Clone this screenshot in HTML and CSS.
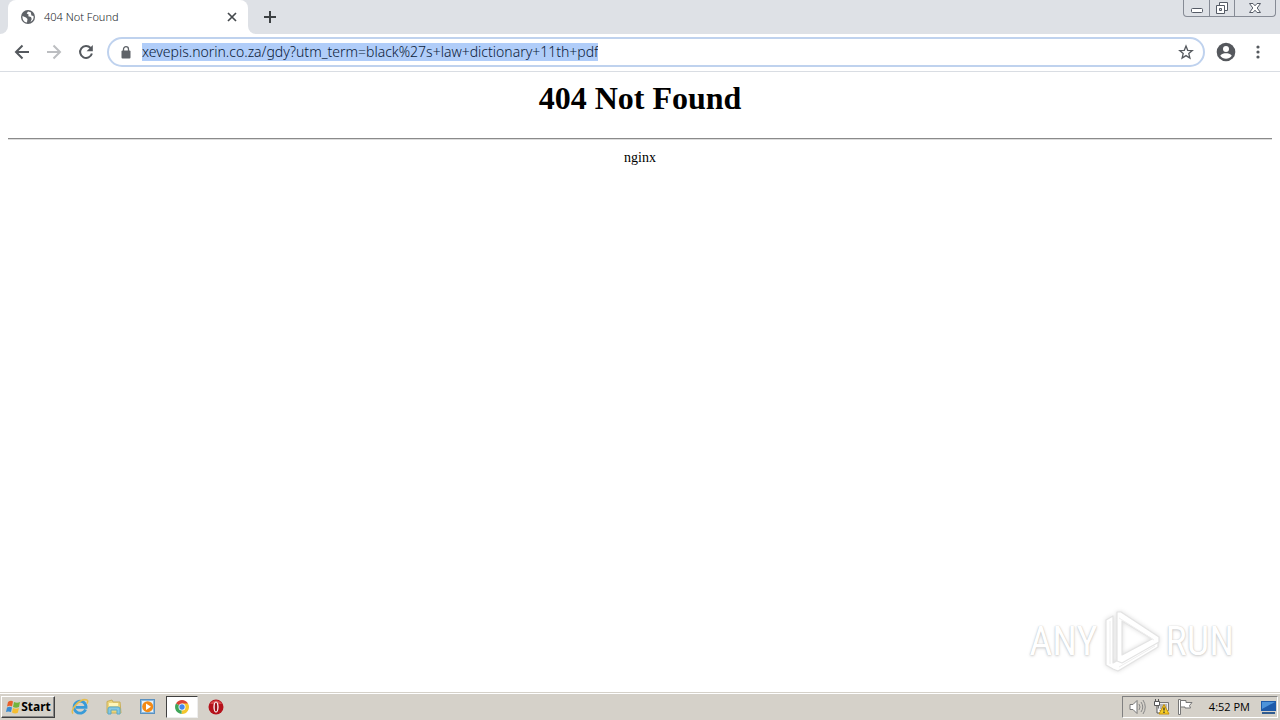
FILE: index.html
```html
<!DOCTYPE html>
<html lang="en">
<head>
<meta charset="utf-8">
<title>404 Not Found</title>
<link rel="stylesheet" href="styles.css">
</head>
<body>
<header class="tabstrip">
  <div class="tab-edge"></div>
  <div class="tab">
    <svg class="globe" viewBox="0 0 16 16"><circle cx="8" cy="8" r="7" fill="#5f6368"/><path d="M2.500 7 6 8.500 7.500 10 7 13.600C4 13.200 2.200 10.700 2.500 7ZM8 2.400 6.700 4.400 8.600 5.600 8.300 7.300 11 8l.7 2-1.200 2.900C13 11.700 14 9.500 13.500 7L11.400 6.400 10.800 3.200Z" fill="#fff"/></svg>
    <span class="tab-title">404 Not Found</span>
    <button class="tab-close" aria-label="Close tab"><svg viewBox="0 0 10 10"><path d="m1 1 8 8m0-8L1 9" stroke="#45494d" stroke-width="1.700"/></svg></button>
  </div>
  <div class="strip-rest">
    <button class="new-tab" aria-label="New tab"><svg viewBox="0 0 12 12"><path d="M6 0v12M0 6h12" stroke="#3c4043" stroke-width="2"/></svg></button>
    <div class="window-controls">
      <button class="wc" aria-label="Minimize"><svg viewBox="0 0 14 14"><rect x="1.500" y="7.500" width="11" height="4" rx="1" fill="#fff" stroke="#555b66"/></svg></button>
      <button class="wc" aria-label="Restore"><svg viewBox="0 0 14 14"><path d="M4.500 1.500h8v8h-8z" fill="#fff" stroke="#555b66"/><path d="M1.500 4.500h8v8h-8z" fill="#fff" stroke="#555b66"/><path d="M4.500 7.500h2v2h-2z" fill="#dee1e6" stroke="#555b66"/></svg></button>
      <button class="wc wc-close" aria-label="Close"><svg viewBox="0 0 14 14"><path d="M1.500 2.500h3.500l2 2.300 2-2.300h3.500L9.200 7l3.300 4.500H9L7 9.200 5 11.500H1.500L4.800 7Z" fill="#fff" stroke="#555b66"/></svg></button>
    </div>
  </div>
</header>
<nav class="toolbar">
  <button class="nav-btn" aria-label="Back"><svg viewBox="0 0 16 16"><path d="M15 8H2m6.500-6.500L2 8l6.500 6.500" fill="none" stroke="#55595e" stroke-width="2"/></svg></button>
  <button class="nav-btn" aria-label="Forward"><svg viewBox="0 0 16 16"><path d="M1 8h13M7.500 1.500 14 8l-6.500 6.500" fill="none" stroke="#bcbec1" stroke-width="2"/></svg></button>
  <button class="nav-btn" aria-label="Reload"><svg viewBox="0 0 16 16"><path d="M12.600 4A6 6 0 1 0 13.900 9.500" fill="none" stroke="#55595e" stroke-width="2"/><path d="M14.800 1v6.200H8.600Z" fill="#55595e"/></svg></button>
  <div class="omnibox">
    <svg class="lock" viewBox="0 0 10 13"><rect x="0.500" y="4.500" width="9" height="8" rx="1" fill="#5f6368"/><path d="M2.500 5V3.200a2.500 2.500 0 0 1 5 0V5" fill="none" stroke="#5f6368" stroke-width="1.300"/></svg>
    <input class="url" type="text" aria-label="Address" value="xevepis.norin.co.za/gdy?utm_term=black%27s+law+dictionary+11th+pdf">
    <button class="star" aria-label="Bookmark"><svg viewBox="0 0 16 16"><path d="m8 2 1.700 4.300 4.600.3-3.500 3 1.100 4.400L8 11.600 4.100 14l1.100-4.400-3.500-3 4.600-.3Z" fill="none" stroke="#55595e" stroke-width="1.300"/></svg></button>
  </div>
  <button class="profile" aria-label="Profile"><svg viewBox="0 0 20 20"><circle cx="10" cy="10" r="9.300" fill="#55585d"/><circle cx="10" cy="7" r="3" fill="#fff"/><path d="M4.200 13.800C5.500 11.800 8 11.200 10 11.200s4.500.6 5.800 2.600C14.400 15.800 12.300 16.800 10 16.800s-4.400-1-5.800-3Z" fill="#fff"/></svg></button>
  <button class="menu" aria-label="Menu"><svg viewBox="0 0 4 16"><circle cx="2" cy="3" r="1.600" fill="#55595e"/><circle cx="2" cy="8" r="1.600" fill="#55595e"/><circle cx="2" cy="13" r="1.600" fill="#55595e"/></svg></button>
</nav>
<main class="page">
  <h1 class="title">404 Not Found</h1>
  <hr class="rule">
  <p class="server">nginx</p>
  <div class="watermark">
    <span>ANY</span>
    <svg viewBox="0 0 60 64"><g fill="#fff" stroke="#e3e3e3" stroke-width="1.200" stroke-linejoin="round"><path d="M4 10 11 6v47l42-23 3 2v5L16 61l-5-2-7-4Z"/><path fill-rule="evenodd" d="M15 2 19 2 57 27v5L20 53l-5-2ZM20 11v34l30-16Z"/></g><path d="m17 8 35 22M8 11v43M17 57l36-21" stroke="#eee" fill="none"/></svg>
    <span>RUN</span>
  </div>
</main>
<footer class="taskbar">
  <button class="start"><svg viewBox="0 0 16 16"><path d="M3 3q3-2 5-.5L7 7.500Q5 6 2 7.500Z" fill="#e85f2a"/><path d="M9 3q3 1.500 6 0l-1 5q-3 1.500-6 0Z" fill="#72b43d"/><path d="M2 8.500q3-1.500 5 0L6 13Q3 11.800 1 13Z" fill="#398bd2"/><path d="M8 9q3 1.500 6 0l-1.200 4.800Q10 15.300 7 13.500Z" fill="#f5bd31"/></svg><span>Start</span></button>
  <div class="quick">
    <button class="task" aria-label="Internet Explorer"><svg viewBox="0 0 18 18"><path d="M14.600 11.500A6 6 0 1 1 15 8.300v1H5" fill="none" stroke="#399bd8" stroke-width="2.800"/><path d="M2.200 15.500C-2 13 9-.5 16 2q1.500 1 0 3.500" fill="none" stroke="#e6bd4e" stroke-width="1.500"/></svg></button>
    <button class="task" aria-label="File Explorer"><svg viewBox="0 0 18 18"><path d="M2 3.500 7 2l1 2h7l1 11H2Z" fill="#edd57b" stroke="#c9ae58"/><path d="M4 5h9v3H4Z" fill="#fff5ba"/><path d="M3 16v-5q0-2 2-2h8q2 0 2 2v5h-3v-4H6v4Z" fill="#85c8e4" stroke="#5ba9c9"/></svg></button>
    <button class="task" aria-label="Media Player"><svg viewBox="0 0 18 18"><rect x="1.500" y="1.500" width="14" height="14" fill="#8dbbe1" stroke="#5a91c0"/><path d="M3 3h11v11H3Z" fill="#e7f2fa"/><circle cx="8.700" cy="8.700" r="5.500" fill="#f38a16"/><path d="m7 5.500 5 3.200L7 12Z" fill="#fff"/></svg></button>
    <button class="task active" aria-label="Chrome"><svg viewBox="0 0 18 18"><path d="M9 9 3 5.500A7 7 0 0 1 15 5.500Z" fill="#dc4436"/><path d="M9 9V5.500h6A7 7 0 0 1 8.500 16Z" fill="#f4c62d"/><path d="m9 9-.5 7A7 7 0 0 1 3 5.500Z" fill="#40a65a"/><circle cx="9" cy="9" r="3.500" fill="#fff"/><circle cx="9" cy="9" r="2.700" fill="#4587ec"/></svg></button>
    <button class="task" aria-label="Opera"><svg viewBox="0 0 18 18"><circle cx="9" cy="9" r="7.500" fill="#b5121b"/><path d="M3 6a7 7 0 0 1 12 0Z" fill="#d9474a"/><ellipse cx="9" cy="9" rx="2.600" ry="5.500" fill="#fff"/><ellipse cx="9" cy="9" rx="1.300" ry="4.500" fill="#9a1019"/></svg></button>
  </div>
  <div class="tray">
    <svg viewBox="0 0 18 18"><path d="M2 6.500h3l4-4v13l-4-4H2Z" fill="#fff" stroke="#777"/><path d="M11 6q2 3 0 6m2-8q3.500 5 0 10m2-12q4.500 7 0 14" fill="none" stroke="#888"/></svg>
    <svg viewBox="0 0 18 18"><path d="M6.500 4.500h10v8h-10z" fill="#eee" stroke="#777"/><path d="M8 6h7v5H8z" fill="#b5b5b5"/><path d="M2.500 3.500h5v4h-5zM3.500 1v2m3-2v2M5 8v7h4" fill="#fff" stroke="#555"/><path d="m12 6.500 5 9.500H7Z" fill="#f7ce24" stroke="#c8920a"/><path d="M12 9.500v3m0 1v1.500" stroke="#333" stroke-width="1.300"/></svg>
    <svg viewBox="0 0 18 18"><path d="M2.500 1.500h2v15h-2z" fill="#fff" stroke="#777"/><path d="M4.500 2.500H10v2h6l-2.500 3 1 2.500H9V9H4.500Z" fill="#fff" stroke="#777"/></svg>
    <time class="clock">4:52 PM</time>
    <svg viewBox="0 0 18 18"><path d="M2 3h15v10H2z" fill="#1e5aaa"/><path d="M3 4h13L3 11Z" fill="#4d93da"/><path d="M3 14h13v2H3z" fill="#315c8f"/></svg>
  </div>
</footer>
</body>
</html>
```
FILE: styles.css
```css
* { box-sizing: border-box; }
body {
  margin: 0;
  min-height: 100vh;
  display: flex;
  flex-direction: column;
  background: #fff;
  font-family: "Noto Sans", sans-serif;
}
button {
  display: flex;
  align-items: center;
  justify-content: center;
  padding: 0;
  border: 0;
  background: none;
  color: #000;
  font-family: inherit;
}
svg { display: block; flex: none; }

.tabstrip { display: flex; height: 34px; background: #fff; }
.tab-edge { width: 8px; background: #dee1e6; border-bottom-right-radius: 8px; }
.tab {
  display: flex;
  align-items: center;
  gap: 8px;
  width: 240px;
  padding: 0 10px 0 12px;
  background: #dee1e6;
  position: relative;
  isolation: isolate;
}
.tab::before {
  content: "";
  position: absolute;
  inset: 0;
  z-index: -1;
  background: #fff;
  border-radius: 8px 8px 0 0;
}
.globe { width: 16px; height: 16px; }
.tab-title {
  flex: 1;
  color: #202428;
  font: 300 11px/16px "Noto Sans", sans-serif;
}
.tab-close { width: 12px; height: 16px; }
.tab-close svg { width: 10px; height: 10px; }
.strip-rest {
  flex: 1;
  display: flex;
  align-items: flex-start;
  justify-content: space-between;
  padding: 0 4px 0 12px;
  background: #dee1e6;
  border-bottom-left-radius: 8px;
}
.new-tab { width: 20px; height: 34px; }
.new-tab svg { width: 12px; height: 12px; }
.window-controls {
  display: flex;
  height: 17px;
  border: 1px solid #868b95;
  border-top: 0;
  border-radius: 0 0 4px 4px;
}
.wc { width: 25px; height: 16px; }
.wc + .wc { border-left: 1px solid #868b95; }
.wc svg { width: 14px; height: 14px; }
.wc.wc-close { width: 41px; }

.toolbar {
  display: flex;
  align-items: center;
  height: 38px;
  padding: 0 12px 1px 6px;
  border-bottom: 1px solid #d9dde3;
}
.nav-btn { width: 32px; height: 32px; }
.nav-btn svg { width: 16px; height: 16px; }
.omnibox {
  flex: 1;
  display: flex;
  align-items: center;
  height: 30px;
  margin-left: 5px;
  padding: 0 9px 0 12px;
  border: 2px solid #bfd2ee;
  border-radius: 15px;
}
.lock { width: 10px; height: 13px; margin-right: 11px; }
.url {
  field-sizing: content;
  height: 18px;
  padding: 0;
  border: 0;
  outline: 0;
  background: #b0cdf9;
  color: #0a1a38;
  font: 300 14px/18px "Noto Sans", sans-serif;
}
.star { width: 16px; height: 20px; margin-left: auto; }
.star svg { width: 16px; height: 16px; }
.profile { width: 20px; height: 20px; margin-left: 11px; }
.profile svg { width: 20px; height: 20px; }
.menu { width: 20px; height: 20px; margin-left: 12px; }
.menu svg { width: 4px; height: 16px; }

.page {
  flex: 1;
  display: flex;
  flex-direction: column;
  padding: 8px;
  font-family: "Liberation Serif", serif;
  text-align: center;
}
.title { margin: 0 0 21px; font-size: 32px; line-height: 37px; }
.rule {
  width: 100%;
  height: 2px;
  margin: 0 0 8px;
  border: 0;
  border-top: 1px solid #8a8a8a;
  border-bottom: 1px solid #ddd;
}
.server { margin: 0; font-size: 14px; line-height: 20px; }
.watermark {
  display: flex;
  align-items: center;
  gap: 4px;
  margin: auto 38px 10px auto;
  color: #fff;
  font: 40px/64px "Roboto Condensed", "Open Sans Condensed", "Liberation Sans", sans-serif;
  text-shadow: 0 0 1px #bbb, 0 1px 3px #ccc;
}
.watermark svg { width: 60px; height: 64px; filter: drop-shadow(0 0 2px #ddd); }

.taskbar {
  display: flex;
  align-items: center;
  height: 28px;
  padding: 1px 2px 1px 1px;
  background: #d5d1c9;
  border-top: 1px solid #d5d1c9;
  box-shadow: inset 0 1px #fff;
}
.start {
  width: 54px;
  height: 22px;
  border: 1px solid;
  border-color: #fff #404040 #404040 #fff;
  box-shadow: inset -1px -1px #888;
  font: bold 12px/20px "Noto Sans", sans-serif;
}
.start svg { width: 16px; height: 16px; }
.quick { display: flex; gap: 2px; margin-left: 9px; }
.task { width: 32px; height: 22px; }
.task svg { width: 18px; height: 18px; }
.active { background: #fff; border: 1px solid; border-color: #404040 #eee #eee #404040; }
.tray {
  display: flex;
  align-items: center;
  gap: 6px;
  height: 22px;
  margin-left: auto;
  padding: 0 0 0 5px;
  border: 1px solid;
  border-color: #808080 #fff #fff #808080;
}
.tray svg { width: 18px; height: 18px; }
.clock { margin: 0 3px 0 9px; font: 11px/16px "Open Sans", sans-serif; }
```
